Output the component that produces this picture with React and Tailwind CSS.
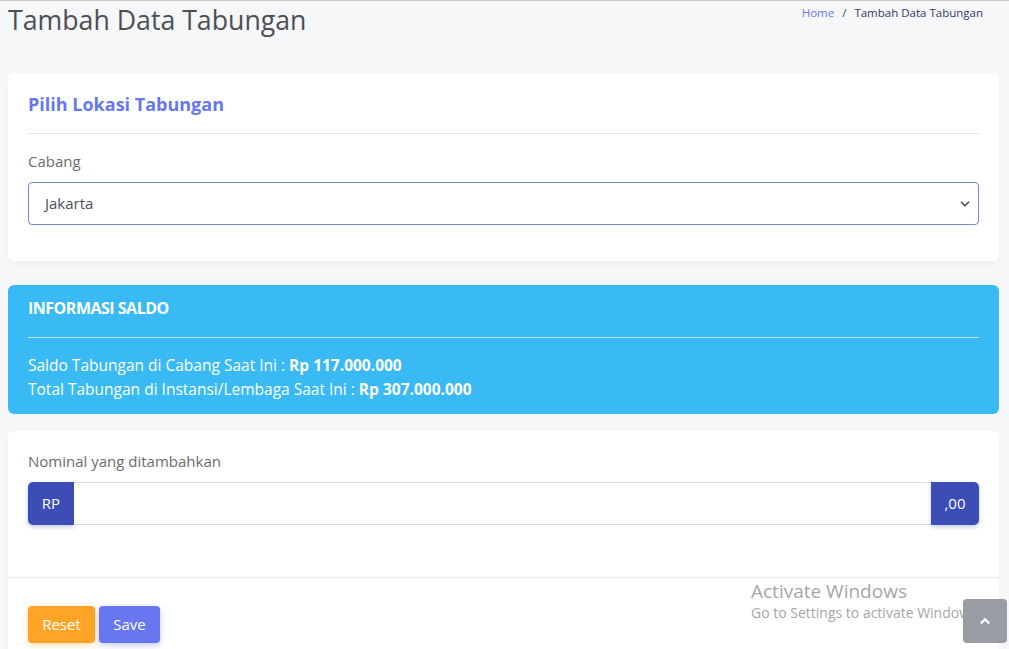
import { ChevronDown, ChevronUp } from 'lucide-react';

export default function App() {
    return (
        <div className="relative w-[1009px] h-[649px] overflow-hidden bg-[#f5f7f8] border-t border-[#c8c8c8] font-['Open_Sans',sans-serif]">
            {/* Header */}
            <div className="flex items-start justify-between px-2">
                <h1 className="text-[26.7px] leading-[37px] text-[#4c4f55]">Tambah Data Tabungan</h1>
                <div className="flex items-center gap-2 text-[11.5px] mt-[3px] mr-[18px] text-[#34395e]">
                    <span className="text-[#6777ef]">Home</span>
                    <span className="text-[#34395e]">/</span>
                    <span>Tambah Data Tabungan</span>
                </div>
            </div>

            <div className="pl-2 pr-[10px] mt-[35px] flex flex-col">
                {/* Lokasi */}
                <div className="bg-white rounded-[6px] shadow-[0_4px_8px_rgba(0,0,0,0.03)] px-5 pt-[19px] pb-[36px]">
                    <h2 className="text-[18px] font-bold text-[#6777ef] leading-[24px]">Pilih Lokasi Tabungan</h2>
                    <div className="border-t border-[#e4e6ea] mt-[17px]" />
                    <div className="text-[15px] text-[#6c6c6c] mt-[17px] leading-[20px]">Cabang</div>
                    <div className="mt-[11px] h-[43px] border border-[#7a83d6] rounded-[4px] flex items-center justify-between pl-4 pr-[6px]">
                        <span className="text-[15px] text-[#495057]">Jakarta</span>
                        <ChevronDown className="w-[14px] h-[14px] text-[#555]" strokeWidth={3} />
                    </div>
                </div>

                {/* Informasi Saldo */}
                <div className="bg-[#3abaf4] rounded-[6px] mt-[24px] px-5 pt-[12px] pb-[13px] text-white">
                    <h3 className="text-[16px] font-bold leading-[22px] tracking-[-0.5px]">INFORMASI SALDO</h3>
                    <div className="border-t border-[#bfe7fb] mt-[18px]" />
                    <div className="mt-[15px] text-[15.5px] leading-[24px]">
                        <div>Saldo Tabungan di Cabang Saat Ini : <span className="font-bold">Rp 117.000.000</span></div>
                        <div>Total Tabungan di Instansi/Lembaga Saat Ini : <span className="font-bold">Rp 307.000.000</span></div>
                    </div>
                </div>

                {/* Nominal */}
                <div className="bg-white rounded-t-[6px] mt-[17px] shadow-[0_4px_8px_rgba(0,0,0,0.03)]">
                    <div className="px-5 pt-[20px] pb-[52px]">
                        <div className="text-[15px] text-[#6c6c6c] leading-[20px]">Nominal yang ditambahkan</div>
                        <div className="mt-[11px] h-[43px] flex">
                            <div className="w-[46px] bg-[#3d4db7] rounded-l-[5px] flex items-center justify-center text-white text-[15px] shadow-[0_2px_4px_rgba(63,81,181,0.3)]">RP</div>
                            <div className="flex-1 border-y border-[#d9dce1] bg-white" />
                            <div className="w-[48px] bg-[#3d4db7] rounded-r-[5px] flex items-center justify-center text-white text-[15px] shadow-[0_2px_4px_rgba(63,81,181,0.3)]">,00</div>
                        </div>
                    </div>
                    <div className="border-t border-[#e6e8eb] px-5 pt-[28px] pb-[10px] flex gap-1">
                        <button className="h-[37px] w-[67px] bg-[#ffa426] text-white text-[15px] rounded-[4px] shadow-[0_2px_6px_rgba(255,164,38,0.4)]">Reset</button>
                        <button className="h-[37px] w-[61px] bg-[#6777ef] text-white text-[15px] rounded-[4px] shadow-[0_2px_6px_rgba(103,119,239,0.4)]">Save</button>
                    </div>
                </div>
            </div>

            {/* Activate Windows watermark */}
            <div className="absolute left-[751px] top-[578px] text-[#a6a6a6] pointer-events-none">
                <div className="text-[19px] leading-[24px]">Activate Windows</div>
                <div className="text-[14px] leading-[20px] whitespace-nowrap">Go to Settings to activate Windows.</div>
            </div>

            {/* Scroll to top */}
            <div className="absolute left-[963px] top-[598px] w-[44px] h-[44px] rounded-[4px] bg-[#9a9ca4] flex items-center justify-center">
                <ChevronUp className="w-[14px] h-[14px] text-white" strokeWidth={4} />
            </div>
        </div>
    );
}
